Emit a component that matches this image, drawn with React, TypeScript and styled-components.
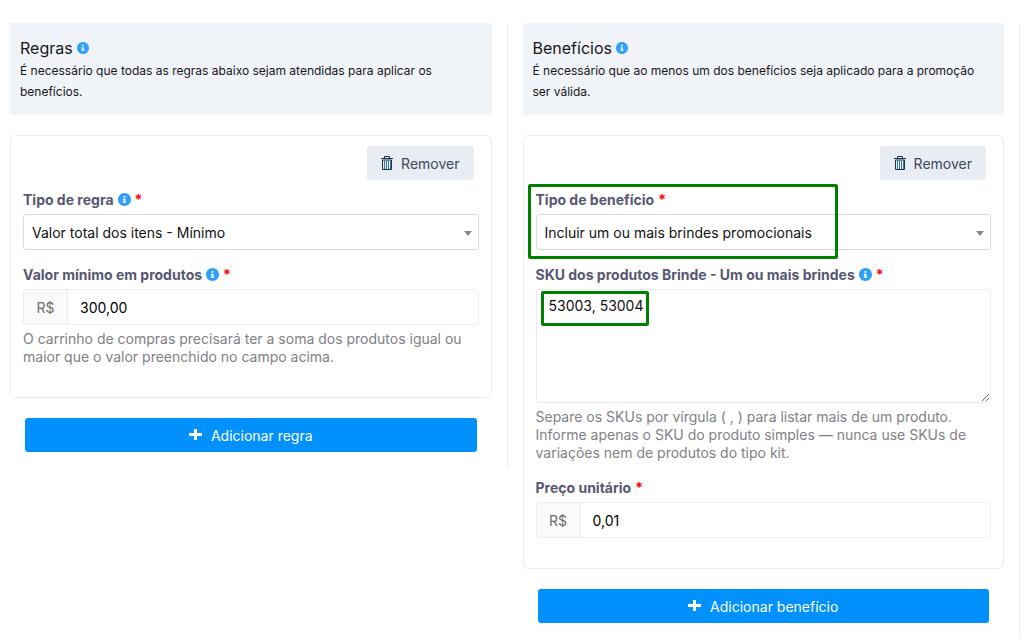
import React, { useId } from "react";
import styled, { createGlobalStyle } from "styled-components";

const GlobalStyle = createGlobalStyle`
  *, *::before, *::after { box-sizing: border-box; }
  body {
    margin: 0;
    background: #fff;
    color: #212529;
    font-family: Inter, "Open Sans", sans-serif;
    font-size: 14px;
  }
  button, input, select, textarea { font: inherit; color: inherit; }
`;

const Page = styled.main`
  display: flex;
  align-items: flex-start;
  padding: 23px 4px 5px 10px;
`;

const Column = styled.section`
  box-sizing: content-box;
  flex: 1 1 0;
  min-width: 0;
  padding: 0 15px 15px 0;
  border-right: 1px solid #ebedf0;

  & + & { padding-left: 15px; }
`;

const Intro = styled.header`
  padding: 13px 10px 12px;
  margin-bottom: 20px;
  background: #f0f3f7;
  color: #16161d;
`;

const Title = styled.h2`
  display: flex;
  align-items: center;
  gap: 4px;
  margin: 0;
  font-size: 16px;
  font-weight: 400;
  line-height: 24px;
`;

const Description = styled.p`
  margin: 0 0 1px;
  font-size: 12px;
  line-height: 21px;
`;

const Card = styled.div`
  padding: 10px 12px 16px;
  border: 1px solid #ebedf0;
  border-radius: 6px;
`;

const Toolbar = styled.div`
  display: flex;
  justify-content: flex-end;
  padding-right: 5px;
  margin-bottom: 9px;
`;

const RemoveButton = styled.button`
  display: flex;
  align-items: center;
  gap: 8px;
  height: 34px;
  padding: 0 14px;
  border: 0;
  border-radius: 3px;
  background: #e8ecf3;
  color: #3a4a5c;
`;

const FieldBox = styled.div`
  position: relative;
  margin-bottom: 14px;
`;

const LabelRow = styled.div`
  display: flex;
  align-items: center;
  gap: 4px;
  height: 20px;
  margin-bottom: 5px;
  color: #575772;
  font-weight: 700;
`;

const Required = styled.span`
  color: #f00;
`;

const SelectBox = styled.div`
  position: relative;

  &::after {
    content: "";
    position: absolute;
    right: 7px;
    top: 17px;
    border: 4px solid transparent;
    border-top: 5px solid #888;
    border-bottom: 0;
    pointer-events: none;
  }
`;

const Select = styled.select`
  display: block;
  width: 100%;
  height: 36px;
  padding: 0 24px 0 8px;
  border: 1px solid #d9d9d9;
  border-radius: 3px;
  background: #fff;
  color: #111;
  appearance: none;
`;

const InputGroup = styled.div`
  display: flex;
  height: 36px;
  border: 1px solid #ebedf0;
  border-radius: 3px;
  overflow: hidden;
`;

const Prefix = styled.span`
  display: flex;
  align-items: center;
  justify-content: center;
  width: 44px;
  border-right: 1px solid #ebedf0;
  background: #fafafa;
  color: #6c6c6c;
`;

const Input = styled.input`
  flex: 1;
  min-width: 0;
  padding: 0 12px;
  border: 0;
  background: #fff;
  color: #000;
`;

const AreaBox = styled.div`
  position: relative;
`;

const TextArea = styled.textarea`
  display: block;
  width: 100%;
  height: 114px;
  padding: 6px 12px;
  border: 1px solid #ebedf0;
  border-radius: 3px;
  background: #fff;
  color: #111;
  line-height: 20px;
  resize: vertical;
`;

const Help = styled.p`
  margin: 5px 0 0;
  padding-bottom: 1px;
  color: #7f7f86;
  line-height: 18px;
`;

const AddButton = styled.button`
  display: flex;
  align-items: center;
  justify-content: center;
  gap: 9px;
  width: calc(100% - 30px);
  height: 34px;
  margin: 20px 15px 0;
  border: 0;
  border-radius: 3px;
  background: #0091ff;
  color: #fff;
`;

const Highlight = styled.span<{ $x: number; $y: number; $w: number; $h: number }>`
  position: absolute;
  left: ${(p) => p.$x}px;
  top: ${(p) => p.$y}px;
  width: ${(p) => p.$w}px;
  height: ${(p) => p.$h}px;
  border: 3px solid #008000;
  border-radius: 2px;
  pointer-events: none;
`;

function InfoIcon({ size = 13 }: { size?: number }) {
  return (
    <svg width={size} height={size} viewBox="8 8 496 496" fill="#2e9fff" aria-hidden="true">
      <path d="M256 8C119 8 8 119 8 256s111 248 248 248 248-111 248-248S393 8 256 8zm0 102a42 42 0 1 1 0 84 42 42 0 0 1 0-84zm64 262c0 7-5 12-12 12H204c-7 0-12-5-12-12v-28c0-7 5-12 12-12h16v-56h-16c-7 0-12-5-12-12v-28c0-7 5-12 12-12h76c7 0 12 5 12 12v96h16c7 0 12 5 12 12v28z" />
    </svg>
  );
}

function TrashIcon() {
  return (
    <svg width="12" height="15" viewBox="0 0 12 15" fill="none" stroke="#1c3347" aria-hidden="true">
      <path d="M0 2.5h12M3.5 2V.5h5V2" />
      <path d="M1.5 4v9.5h9V4z" />
      <path d="M3.5 4v9M5.5 4v9M7.5 4v9M9.5 4v9" stroke="#3c7896" />
    </svg>
  );
}

function PlusIcon() {
  return (
    <svg width="13" height="12" viewBox="0 0 13 12" fill="#fff" aria-hidden="true">
      <path d="M5 0h3v4h5v3H8v4H5V7H0V4h5z" />
    </svg>
  );
}

function Label({ htmlFor, info, children }: { htmlFor: string; info?: boolean; children: string }) {
  return (
    <LabelRow>
      <label htmlFor={htmlFor}>{children}</label>
      {info && <InfoIcon />}
      <Required>*</Required>
    </LabelRow>
  );
}

function SelectField({ label, info, value, highlighted }: { label: string; info?: boolean; value: string; highlighted?: boolean }) {
  const id = useId();
  return (
    <FieldBox>
      <Label htmlFor={id} info={info}>{label}</Label>
      <SelectBox>
        <Select id={id} defaultValue={value}>
          <option>{value}</option>
        </Select>
      </SelectBox>
      {highlighted && <Highlight $x={-8} $y={-5} $w={310} $h={75} />}
    </FieldBox>
  );
}

function MoneyField({ label, info, value, help }: { label: string; info?: boolean; value: string; help?: string }) {
  const id = useId();
  return (
    <FieldBox>
      <Label htmlFor={id} info={info}>{label}</Label>
      <InputGroup>
        <Prefix>R$</Prefix>
        <Input id={id} defaultValue={value} />
      </InputGroup>
      {help && <Help>{help}</Help>}
    </FieldBox>
  );
}

function Remove() {
  return (
    <Toolbar>
      <RemoveButton type="button">
        <TrashIcon />
        Remover
      </RemoveButton>
    </Toolbar>
  );
}

export default function App() {
  const skuId = useId();
  return (
    <>
      <GlobalStyle />
      <Page>
        <Column>
          <Intro>
            <Title>Regras <InfoIcon size={12} /></Title>
            <Description>
              É necessário que todas as regras abaixo sejam atendidas para aplicar os benefícios.
            </Description>
          </Intro>
          <Card>
            <Remove />
            <SelectField label="Tipo de regra" info value="Valor total dos itens - Mínimo" />
            <MoneyField
              label="Valor mínimo em produtos"
              info
              value="300,00"
              help="O carrinho de compras precisará ter a soma dos produtos igual ou maior que o valor preenchido no campo acima."
            />
          </Card>
          <AddButton type="button"><PlusIcon />Adicionar regra</AddButton>
        </Column>
        <Column>
          <Intro>
            <Title>Benefícios <InfoIcon size={12} /></Title>
            <Description>
              É necessário que ao menos um dos benefícios seja aplicado para a promoção ser válida.
            </Description>
          </Intro>
          <Card>
            <Remove />
            <SelectField label="Tipo de benefício" value="Incluir um ou mais brindes promocionais" highlighted />
            <FieldBox>
              <Label htmlFor={skuId} info>SKU dos produtos Brinde - Um ou mais brindes</Label>
              <AreaBox>
                <TextArea id={skuId} defaultValue="53003, 53004" />
                <Highlight $x={5} $y={2} $w={108} $h={35} />
              </AreaBox>
              <Help>
                Separe os SKUs por vírgula ( , ) para listar mais de um produto. Informe apenas o SKU do
                produto simples — nunca use SKUs de variações nem de produtos do tipo kit.
              </Help>
            </FieldBox>
            <MoneyField label="Preço unitário" value="0,01" />
          </Card>
          <AddButton type="button"><PlusIcon />Adicionar benefício</AddButton>
        </Column>
      </Page>
    </>
  );
}
